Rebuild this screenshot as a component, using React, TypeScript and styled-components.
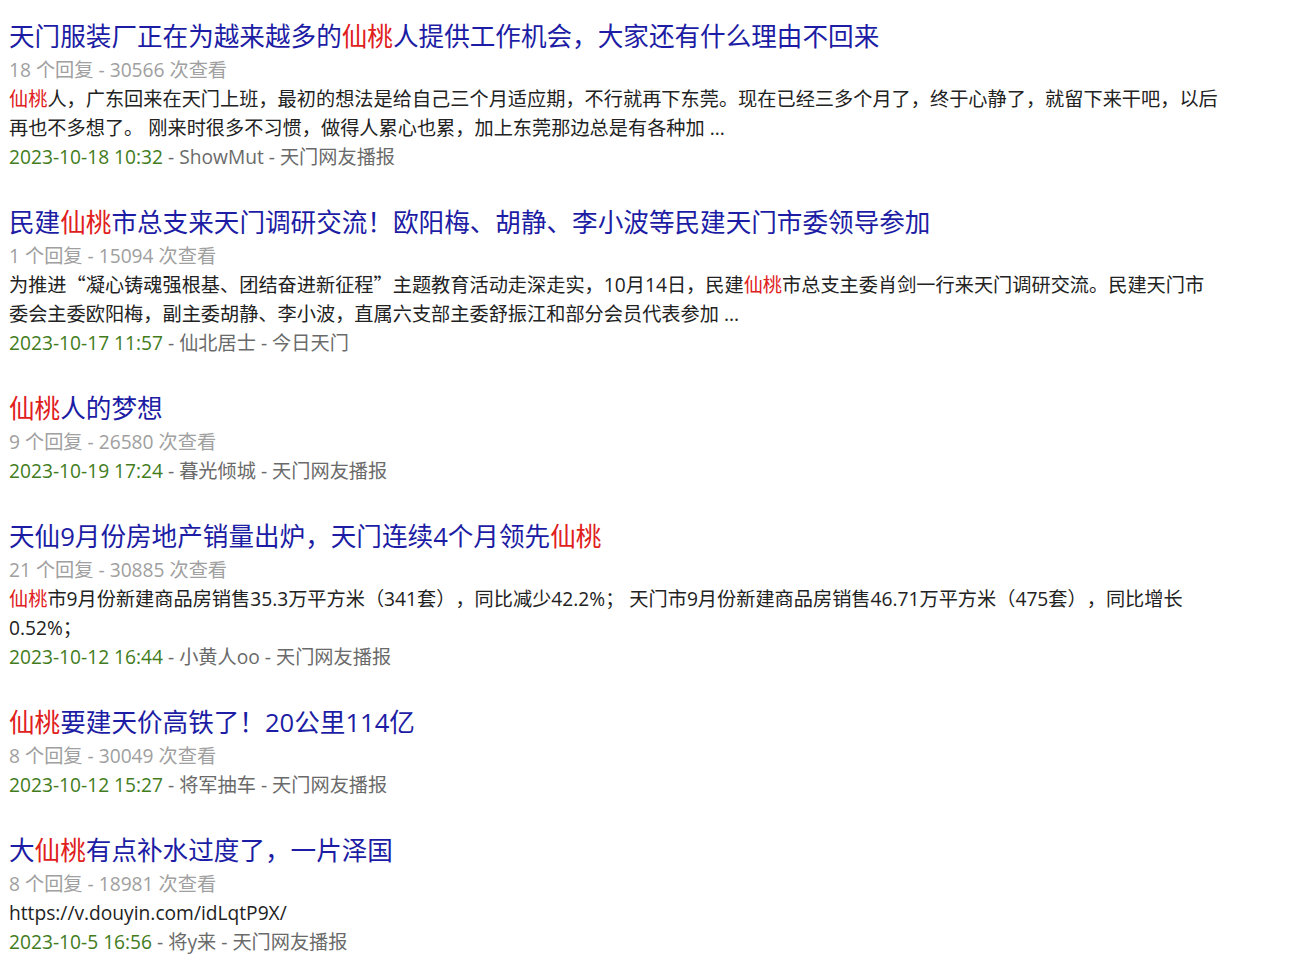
import { Fragment } from "react"
import styled, { createGlobalStyle } from "styled-components"

type Part = string | { hl: string }

interface Post {
    title: Part[]
    replies: number
    views: number
    snippet?: Part[]
    date: string
    author: string
    board: string
}

const hl = (s: string) => ({ hl: s })

const posts: Post[] = [
    {
        title: ["天门服装厂正在为越来越多的", hl("仙桃"), "人提供工作机会，大家还有什么理由不回来"],
        replies: 18,
        views: 30566,
        snippet: [
            hl("仙桃"),
            "人，广东回来在天门上班，最初的想法是给自己三个月适应期，不行就再下东莞。现在已经三多个月了，终于心静了，就留下来干吧，以后再也不多想了。 刚来时很多不习惯，做得人累心也累，加上东莞那边总是有各种加 ...",
        ],
        date: "2023-10-18 10:32",
        author: "ShowMut",
        board: "天门网友播报",
    },
    {
        title: ["民建", hl("仙桃"), "市总支来天门调研交流！欧阳梅、胡静、李小波等民建天门市委领导参加"],
        replies: 1,
        views: 15094,
        snippet: [
            "为推进“凝心铸魂强根基、团结奋进新征程”主题教育活动走深走实，10月14日，民建",
            hl("仙桃"),
            "市总支主委肖剑一行来天门调研交流。民建天门市委会主委欧阳梅，副主委胡静、李小波，直属六支部主委舒振江和部分会员代表参加 ...",
        ],
        date: "2023-10-17 11:57",
        author: "仙北居士",
        board: "今日天门",
    },
    {
        title: [hl("仙桃"), "人的梦想"],
        replies: 9,
        views: 26580,
        date: "2023-10-19 17:24",
        author: "暮光倾城",
        board: "天门网友播报",
    },
    {
        title: ["天仙9月份房地产销量出炉，天门连续4个月领先", hl("仙桃")],
        replies: 21,
        views: 30885,
        snippet: [
            hl("仙桃"),
            "市9月份新建商品房销售35.3万平方米（341套），同比减少42.2%； 天门市9月份新建商品房销售46.71万平方米（475套），同比增长0.52%；",
        ],
        date: "2023-10-12 16:44",
        author: "小黄人oo",
        board: "天门网友播报",
    },
    {
        title: [hl("仙桃"), "要建天价高铁了！20公里114亿"],
        replies: 8,
        views: 30049,
        date: "2023-10-12 15:27",
        author: "将军抽车",
        board: "天门网友播报",
    },
    {
        title: ["大", hl("仙桃"), "有点补水过度了，一片泽国"],
        replies: 8,
        views: 18981,
        snippet: ["https://v.douyin.com/idLqtP9X/"],
        date: "2023-10-5 16:56",
        author: "将y来",
        board: "天门网友播报",
    },
]

// curly quotes should be full width, as in the CJK font
function withQuotes(text: string, key: number) {
    return text.split(/([“”])/).map((piece, j) =>
        piece === "“" || piece === "”" ? (
            <Quote key={`${key}-${j}`}>{piece}</Quote>
        ) : (
            <Fragment key={`${key}-${j}`}>{piece}</Fragment>
        )
    )
}

function renderParts(parts: Part[]) {
    return parts.map((p, i) =>
        typeof p === "string" ? withQuotes(p, i) : <Highlight key={i}>{p.hl}</Highlight>
    )
}

function App() {
    return (
        <>
            <GlobalStyle />
            <ResultList lang="zh-CN">
                {posts.map((post, i) => (
                    <Result key={i}>
                        <Title href="#">{renderParts(post.title)}</Title>
                        <Meta>
                            {post.replies} 个回复 - {post.views} 次查看
                        </Meta>
                        {post.snippet && <Snippet>{renderParts(post.snippet)}</Snippet>}
                        <Footer>
                            <DateText>{post.date}</DateText> - {post.author} - {post.board}
                        </Footer>
                    </Result>
                ))}
            </ResultList>
        </>
    )
}

export default App

const GlobalStyle = createGlobalStyle`
    body {
        margin: 0;
        background: #ffffff;
        font-family: "Open Sans", "Noto Sans CJK SC", sans-serif;
        text-spacing-trim: space-all;
    }
`

const ResultList = styled.div`
    width: 1212px;
    padding: 19px 0 0 9px;
    display: flex;
    flex-direction: column;
    gap: 34px;
`

const Result = styled.div`
    display: flex;
    flex-direction: column;
`

const Title = styled.a`
    font-size: 25.6px;
    line-height: 36px;
    color: #1c1ca4;
    text-decoration: none;
`

const Highlight = styled.span`
    color: #e0201c;
`

const Quote = styled.span`
    font-family: "Noto Sans CJK SC", sans-serif;
`

const Meta = styled.div`
    font-size: 19.2px;
    line-height: 29px;
    color: #a0a0a0;
`

const Snippet = styled.div`
    font-size: 19.2px;
    line-height: 29px;
    color: #222;
`

const Footer = styled.div`
    font-size: 19.2px;
    line-height: 29px;
    color: #6a6a6a;
`

const DateText = styled.span`
    color: #427c1c;
`
